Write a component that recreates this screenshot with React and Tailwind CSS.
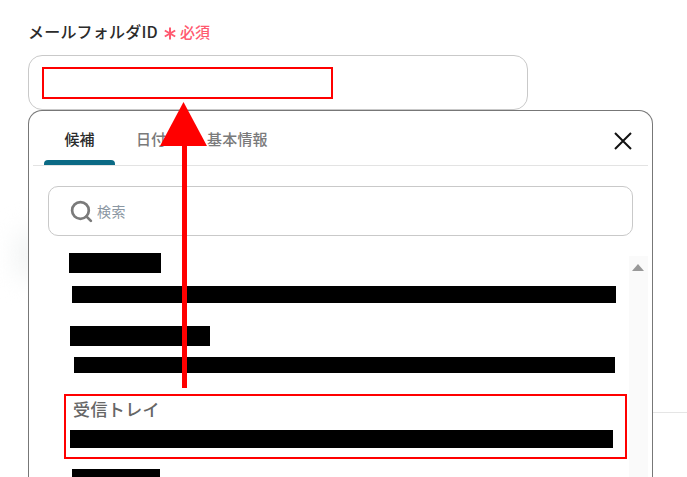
import React from 'react';
import { Search } from 'lucide-react';

function Bar({ className }) {
  return <div className={`bg-black ${className}`} />;
}

export default function App() {
  return (
    <div
      className="relative h-[477px] w-[687px] overflow-hidden bg-white pl-[28px] pt-[19px]"
      style={{ fontFamily: '"Noto Sans CJK JP", "Noto Sans", sans-serif' }}
    >
      {/* field label */}
      <div className="flex h-[24px] items-center">
        <span className="text-[16px] font-medium tracking-[0.2px] text-[#2b2b2b]">メールフォルダID</span>
        <svg className="ml-[6px] mt-[5px]" width="12" height="13" viewBox="0 0 12 13">
          <path d="M6 0.5 V12.5 M0.8 3.5 L11.2 9.5 M11.2 3.5 L0.8 9.5" stroke="#ff5a70" strokeWidth="2" fill="none" />
        </svg>
        <span className="ml-[4px] mt-[1px] text-[15px] font-medium leading-none text-[#ff5a70]">必須</span>
      </div>

      {/* input */}
      <div className="mt-[12px] h-[55px] w-[500px] rounded-[14px] border border-[#c9c9c9] bg-white" />

      {/* faint shadow and line behind the popup */}
      <div className="absolute left-[16px] top-[230px] h-[50px] w-[30px] rounded-full bg-[#f1f3f3] blur-md" />
      <div className="absolute left-[653px] top-[412px] h-px w-[34px] bg-[#e5e5e5]" />

      {/* popup */}
      <div className="relative h-[400px] w-[625px] rounded-t-[14px] border border-b-0 border-[#777777] bg-white px-[4px]">
        <div className="flex h-[55px] items-end border-b border-[#e3e3e3] pl-[11px] pr-[15px]">
          <div className="flex h-[54px] w-[71px] flex-col items-center justify-end">
            <span className="mb-[10px] text-[15px] font-medium text-[#2b2b2b]">候補</span>
            <div className="h-[5px] w-full rounded-t-[4px] bg-[#0b6a85]" />
          </div>
          <span className="mb-[15px] ml-[21px] text-[15px] font-medium text-[#7a7a7a]">日付</span>
          <span className="mb-[15px] ml-[41px] text-[15px] font-medium tracking-[0.2px] text-[#7a7a7a]">基本情報</span>
          <svg className="mb-[14px] ml-auto" width="20" height="20" viewBox="0 0 20 20">
            <path d="M2 2 L18 18 M18 2 L2 18" stroke="#111111" strokeWidth="2" fill="none" />
          </svg>
        </div>

        <div className="ml-[15px] mt-[20px] flex h-[50px] w-[585px] items-center rounded-[10px] border border-[#c9c9c9] pl-[20px]">
          <Search size={25} strokeWidth={2.6} color="#7a7a7a" />
          <span className="ml-[3px] text-[14px] tracking-[0.5px] text-[#8b97a3]">検索</span>
        </div>

        <div className="relative flex">
          <div className="flex-1 pt-[17px]">
            <Bar className="ml-[36px] h-[20px] w-[92px]" />
            <Bar className="ml-[39px] mt-[13px] h-[17px] w-[544px]" />
            <Bar className="ml-[37px] mt-[23px] h-[20px] w-[140px]" />
            <Bar className="ml-[41px] mt-[11px] h-[16px] w-[541px]" />
            <div className="ml-[40px] mt-[24px] text-[17px] font-medium leading-[24px] tracking-[0.4px] text-[#666666]">受信トレイ</div>
            <Bar className="ml-[37px] mt-[9px] h-[18px] w-[543px]" />
            <Bar className="ml-[39px] mt-[21px] h-[20px] w-[88px]" />
          </div>
          {/* scrollbar */}
          <div className="mt-[20px] h-[221px] w-[19px] bg-[#fafafa] pl-[3px] pt-[8px]">
            <div className="h-0 w-0 border-x-[6.5px] border-b-[7px] border-x-transparent border-b-[#999999]" />
          </div>
        </div>
      </div>

      {/* red annotations */}
      <div className="absolute left-[42px] top-[67px] h-[32px] w-[291px] border-2 border-[#ff0000]" />
      <div className="absolute left-[64px] top-[394px] h-[65px] w-[563px] border-2 border-[#ff0000]" />
      <svg className="absolute left-[160px] top-[102px]" width="48" height="287" viewBox="0 0 48 287">
        <path d="M23.5 0 L47 44 L0 44 Z" fill="#ff0000" />
        <rect x="22" y="44" width="5" height="242" fill="#ff0000" />
      </svg>
    </div>
  );
}
